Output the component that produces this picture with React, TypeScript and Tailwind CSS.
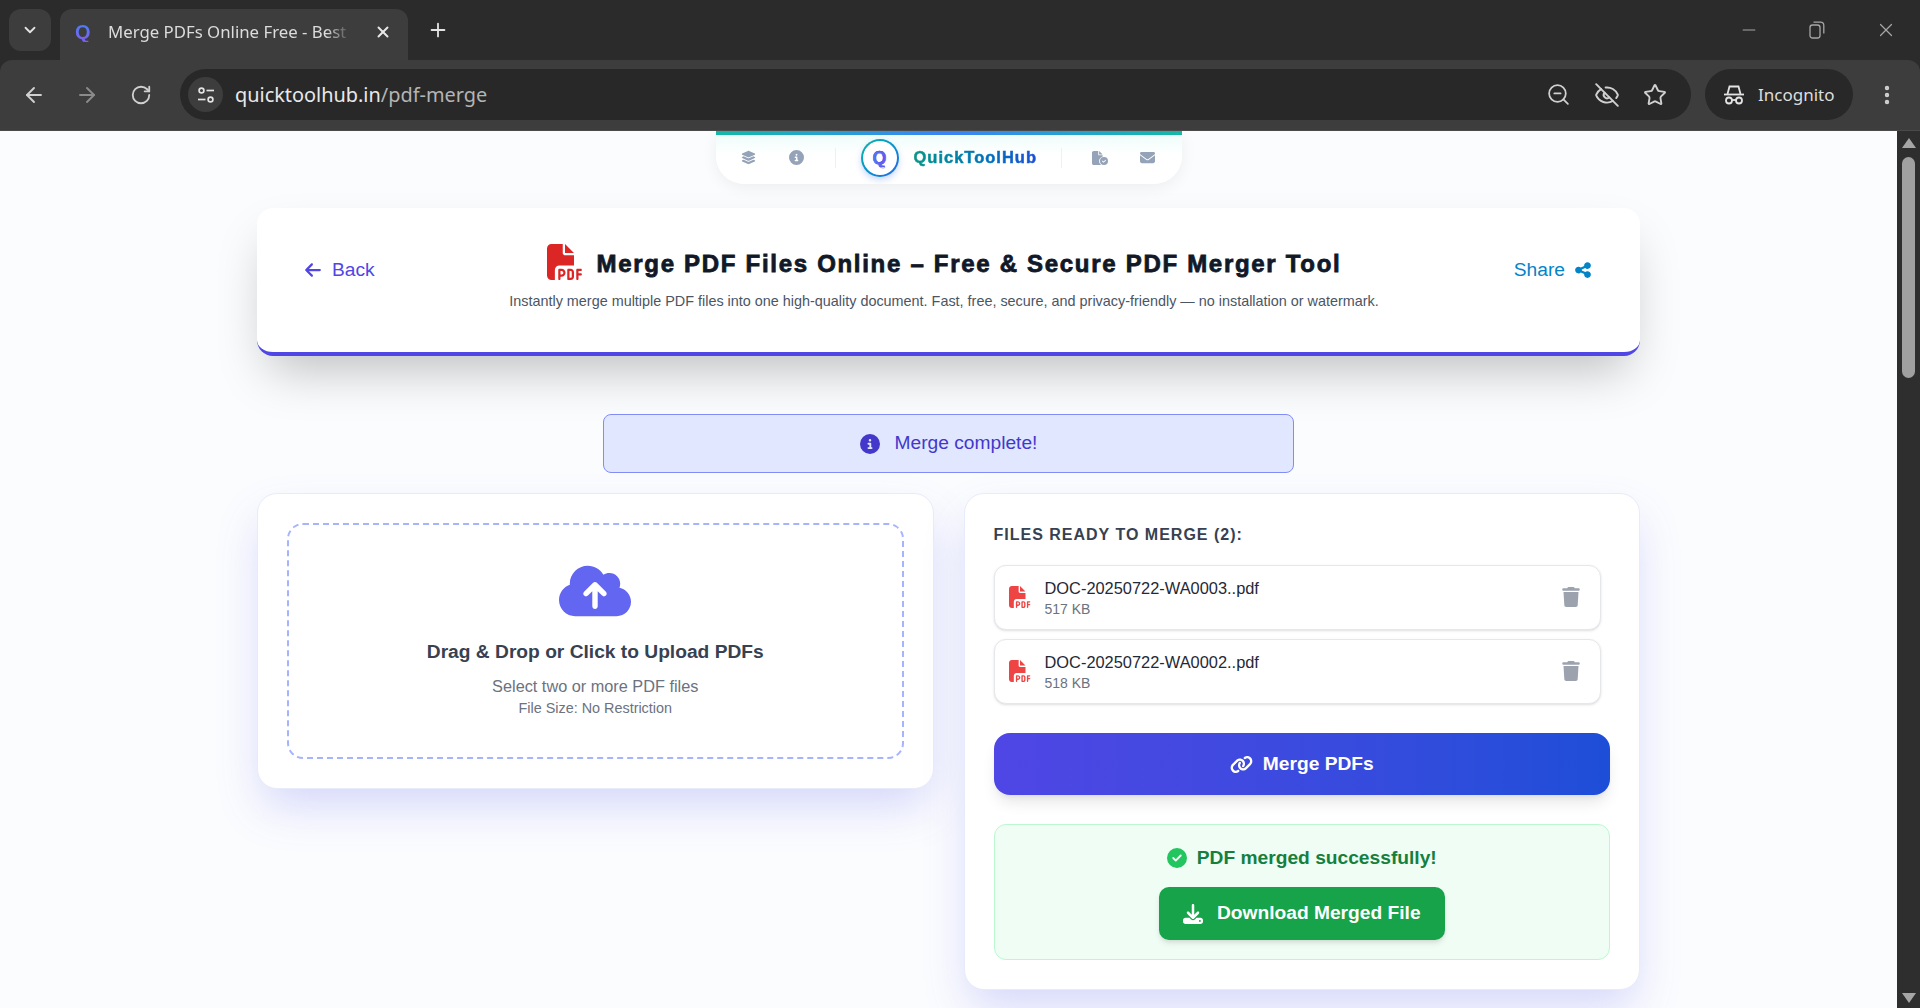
import React from "react";
import { ChevronDown, X, Plus, ArrowLeft, ArrowRight, RotateCw, ZoomOut, EyeOff, Star, EllipsisVertical, Minus } from "lucide-react";
import { FaLayerGroup, FaCircleInfo, FaFileCircleCheck, FaEnvelope, FaFilePdf, FaArrowLeft, FaShareNodes, FaCloudArrowUp, FaTrash, FaLink, FaCircleCheck, FaDownload } from "react-icons/fa6";

function TuneIcon() {
  return (
    <svg width="20" height="20" viewBox="0 0 20 20" fill="none" stroke="#e3e3e3" strokeWidth="1.7">
      <circle cx="5.5" cy="5.5" r="2.4" />
      <path d="M10.5 5.5H18" />
      <path d="M2 14.5H9.5" />
      <circle cx="14.5" cy="14.5" r="2.4" />
    </svg>
  );
}

function IncognitoIcon() {
  return (
    <svg width="22" height="22" viewBox="0 0 22 22" fill="none" stroke="#e3e3e3" strokeWidth="1.8">
      <path d="M1 10.5H21" />
      <path d="M4.5 10L6.5 2.5H15.5L17.5 10" />
      <circle cx="6" cy="16.5" r="3" />
      <circle cx="16" cy="16.5" r="3" />
      <path d="M9 16H13" />
    </svg>
  );
}

function RestoreIcon() {
  return (
    <svg width="16" height="18" viewBox="0 0 16 18" fill="none" stroke="#a6a6a6" strokeWidth="1.3">
      <rect x="1" y="4" width="10" height="13" rx="2.5" />
      <path d="M4.5 1.2H11.5C13.5 1.2 14.8 2.5 14.8 4.5V12.5" />
    </svg>
  );
}

function BrowserChrome() {
  return (
    <header className="shrink-0 bg-[#2b2b2b] font-['Noto_Sans',sans-serif]">
      <div className="h-[60px] flex items-start pl-[9px]">
        <div className="mt-[9px] w-[42px] h-[42px] rounded-xl bg-[#3d3d3d] flex items-center justify-center text-[#e3e3e3]">
          <ChevronDown size={18} strokeWidth={2.4} />
        </div>
        <div className="ml-[9px] mt-[9px] w-[348px] h-[51px] rounded-t-xl bg-[#3d3d3d] flex items-center pl-[15px] pr-[16px] pb-[6px]">
          <span className="w-[20px] text-[20px] leading-none font-bold font-['Liberation_Sans',sans-serif] bg-gradient-to-b from-[#3b82f6] to-[#7c5cf0] bg-clip-text text-transparent">Q</span>
          <span className="ml-[13px] flex-1 overflow-hidden whitespace-nowrap text-[16.8px] text-[#dcdcdc] [mask-image:linear-gradient(to_right,black_88%,transparent_98%)]">Merge PDFs Online Free - Best Free</span>
          <X size={18} strokeWidth={2.6} className="ml-[18px] text-[#e8e8e8] shrink-0" />
        </div>
        <Plus size={22} strokeWidth={2} className="ml-[19px] mt-[19px] text-[#e3e3e3]" />
        <div className="ml-auto flex items-center text-[#a6a6a6] mt-[19px]">
          <Minus size={20} strokeWidth={1.4} />
          <div className="ml-[50px]"><RestoreIcon /></div>
          <X size={22} strokeWidth={1.3} className="ml-[50px] mr-[23px]" />
        </div>
      </div>
      <div className="h-[71px] bg-[#3d3d3d] rounded-t-xl flex items-start pt-[9px] border-b border-[#4a4a4a]">
        <div className="flex items-center h-[51px] pl-[22px] text-[#d0d0d0]">
          <ArrowLeft size={24} strokeWidth={1.9} />
          <ArrowRight size={24} strokeWidth={1.9} className="ml-[29px] text-[#8b8b8b]" />
          <RotateCw size={22} strokeWidth={2} className="ml-[31px]" />
        </div>
        <div className="ml-[28px] w-[1511px] h-[51px] rounded-full bg-[#282828] flex items-center pl-[8px] pr-[24px]">
          <div className="w-[35px] h-[35px] rounded-full bg-[#3d3d3d] flex items-center justify-center"><TuneIcon /></div>
          <span className="ml-[12px] text-[19.9px] text-[#e8e8e8]">quicktoolhub.in<span className="text-[#b4b4b4]">/pdf-merge</span></span>
          <div className="ml-auto flex items-center gap-[23px] text-[#d0d0d0]">
            <ZoomOut size={25} strokeWidth={1.7} />
            <EyeOff size={26} strokeWidth={1.8} />
            <Star size={24} strokeWidth={1.9} />
          </div>
        </div>
        <div className="ml-[14px] w-[148px] h-[51px] rounded-full bg-[#282828] flex items-center pl-[18px]">
          <IncognitoIcon />
          <span className="ml-[13px] text-[17px] text-[#dedede]">Incognito</span>
        </div>
        <EllipsisVertical size={24} strokeWidth={2.4} className="ml-[22px] mt-[14px] text-[#d0d0d0]" />
      </div>
    </header>
  );
}

function NavPill() {
  return (
    <nav className="mx-auto w-[466px] h-[53px] bg-white rounded-b-[28px] shadow-[0_4px_16px_rgba(0,0,0,0.06)] overflow-hidden flex flex-col">
      <div className="h-[4px] shrink-0 bg-gradient-to-r from-[#14b8a6] via-[#3b82f6] to-[#14b8a6]" />
      <div className="flex-1 flex items-center pb-[4px] bg-gradient-to-b from-[#effdfb] to-white to-40% text-[#94a3b8]">
        <FaLayerGroup size={15} className="ml-[25px]" />
        <FaCircleInfo size={15} className="ml-[33px]" />
        <div className="ml-[31px] w-px h-[20px] bg-[#eef0f3]" />
        <div className="ml-[25px] w-[38px] h-[38px] rounded-full bg-gradient-to-br from-[#14b8a6] to-[#2563eb] p-[2px] shadow-[0_3px_6px_rgba(37,99,235,0.25)]">
          <div className="w-full h-full rounded-full bg-white flex items-center justify-center">
            <span className="text-[18px] leading-none font-bold [-webkit-text-stroke:0.4px_#4f46e5] bg-gradient-to-r from-[#3b82f6] to-[#6d4df0] bg-clip-text text-transparent">Q</span>
          </div>
        </div>
        <span className="ml-[15px] text-[16.5px] font-bold tracking-[1px] [-webkit-text-stroke:0.5px_transparent] bg-gradient-to-r from-[#0d9488] to-[#1d4ed8] bg-clip-text text-transparent">QuickToolHub</span>
        <div className="ml-[24px] w-px h-[20px] bg-[#eef0f3]" />
        <FaFileCircleCheck size={16} className="ml-[30px]" />
        <FaEnvelope size={15} className="ml-[32px]" />
      </div>
    </nav>
  );
}

function HeaderCard() {
  return (
    <section className="mt-[24px] h-[148px] bg-white rounded-2xl border-b-4 border-[#4f46e5] shadow-2xl flex items-start pt-[34px] pl-[47px] pr-[48px]">
      <a className="mt-[14px] flex items-center gap-[10px] text-[19.2px] leading-[28px] text-[#4f46e5] w-[176px] shrink-0">
        <FaArrowLeft size={18} />
        <span>Back</span>
      </a>
      <div className="flex-1 flex flex-col items-center">
        <div className="flex items-center gap-[14px] h-[44px]">
          <FaFilePdf size={36} className="text-[#dc2626] -mt-[4px]" />
          <h1 className="text-[24px] leading-[32px] font-bold tracking-[1.7px] text-[#111827] [-webkit-text-stroke:0.8px_#111827]">Merge PDF Files Online – Free &amp; Secure PDF Merger Tool</h1>
        </div>
        <p className="mt-[5px] whitespace-nowrap text-[14.4px] leading-[20px] text-[#4b5563]">Instantly merge multiple PDF files into one high-quality document. Fast, free, secure, and privacy-friendly — no installation or watermark.</p>
      </div>
      <a className="mt-[14px] w-[184px] shrink-0 flex items-center justify-end gap-[9px] text-[19.2px] leading-[28px] text-[#0284c7]">
        <span>Share</span>
        <FaShareNodes size={18} />
      </a>
    </section>
  );
}

function Alert() {
  return (
    <div className="mt-[58px] mx-auto w-[691px] h-[59px] bg-[#e0e7ff] border border-[#818cf8] rounded-lg flex items-center justify-center gap-[15px] text-[19.2px] text-[#4338ca]">
      <FaCircleInfo size={20} />
      <span>Merge complete!</span>
    </div>
  );
}

const cardClass = "bg-white rounded-[20px] border border-[#e8ebfa] p-[29px] shadow-[0_22px_45px_-6px_rgba(99,102,241,0.25)]";

function UploadCard() {
  return (
    <div className={cardClass}>
      <div className="h-[236px] rounded-2xl border-2 border-dashed border-[#a5b4fc] flex flex-col items-center pt-[37px]">
        <FaCloudArrowUp className="w-[72px] h-[58px] text-[#6366f1]" />
        <h2 className="mt-[18px] text-[19.2px] leading-[28px] font-bold text-[#374151]">Drag &amp; Drop or Click to Upload PDFs</h2>
        <p className="mt-[9px] text-[16.3px] leading-[23px] text-[#6b7280]">Select two or more PDF files</p>
        <p className="text-[14.4px] leading-[20px] text-[#6b7280]">File Size: No Restriction</p>
      </div>
    </div>
  );
}

function FileRow({ name, size }: { name: string; size: string }) {
  return (
    <li className="h-[65px] rounded-xl border border-[#e5e7eb] bg-white shadow-sm flex items-center pl-[14px] pr-[19px]">
      <FaFilePdf size={22} className="text-[#ef4444] -mt-[2px]" />
      <div className="ml-[14px] flex flex-col">
        <span className="text-[16.4px] leading-[22px] text-[#1f2937]">{name}</span>
        <span className="text-[14px] leading-[20px] text-[#6b7280]">{size}</span>
      </div>
      <FaTrash size={20} className="ml-auto -mt-[2px] text-[#9ca3af]" />
    </li>
  );
}

function FilesCard() {
  return (
    <div className={cardClass}>
      <h3 className="text-[16px] leading-[24px] font-bold tracking-[1px] text-[#374151]">FILES READY TO MERGE (2):</h3>
      <ul className="mt-[18px] w-[607px] flex flex-col gap-[9px]">
        <FileRow name="DOC-20250722-WA0003..pdf" size="517 KB" />
        <FileRow name="DOC-20250722-WA0002..pdf" size="518 KB" />
      </ul>
      <button className="mt-[29px] w-full h-[62px] rounded-2xl bg-gradient-to-r from-[#4f46e5] to-[#1d4ed8] shadow-lg flex items-center justify-center gap-[10px] text-[19.2px] font-bold text-white">
        <FaLink size={23} />
        <span>Merge PDFs</span>
      </button>
      <div className="mt-[29px] h-[136px] rounded-xl bg-[#f0fdf4] border border-[#bbf7d0] flex flex-col items-center pt-[19px]">
        <div className="flex items-center gap-[10px] text-[19.2px] leading-[28px] font-bold text-[#15803d]">
          <FaCircleCheck size={20} className="text-[#22c55e]" />
          <span>PDF merged successfully!</span>
        </div>
        <button className="mt-[15px] w-[286px] h-[53px] rounded-[10px] bg-[#16a34a] shadow-md flex items-center justify-center gap-[14px] text-[19.2px] font-bold text-white">
          <FaDownload size={20} />
          <span>Download Merged File</span>
        </button>
      </div>
    </div>
  );
}

function Scrollbar() {
  return (
    <aside className="shrink-0 w-[23px] bg-[#2e2e2e] flex flex-col items-center pt-[7px] pb-[5px]">
      <div className="w-0 h-0 border-x-[7px] border-x-transparent border-b-[10px] border-b-[#a6a6a6]" />
      <div className="mt-[9px] w-[13px] h-[221px] rounded-full bg-[#a0a0a0]" />
      <div className="mt-auto w-0 h-0 border-x-[7px] border-x-transparent border-t-[10px] border-t-[#a6a6a6]" />
    </aside>
  );
}

export default function App() {
  return (
    <div className="h-[1008px] w-[1920px] overflow-hidden flex flex-col font-['Liberation_Sans',Arial,sans-serif]">
      <BrowserChrome />
      <div className="flex-1 min-h-0 flex">
        <main className="flex-1 min-w-0 overflow-hidden bg-[#fbfcfe]">
          <div className="mx-auto w-[1383px]">
            <NavPill />
            <HeaderCard />
            <Alert />
            <div className="mt-[20px] grid grid-cols-2 gap-[30px] items-start">
              <UploadCard />
              <FilesCard />
            </div>
          </div>
        </main>
        <Scrollbar />
      </div>
    </div>
  );
}
